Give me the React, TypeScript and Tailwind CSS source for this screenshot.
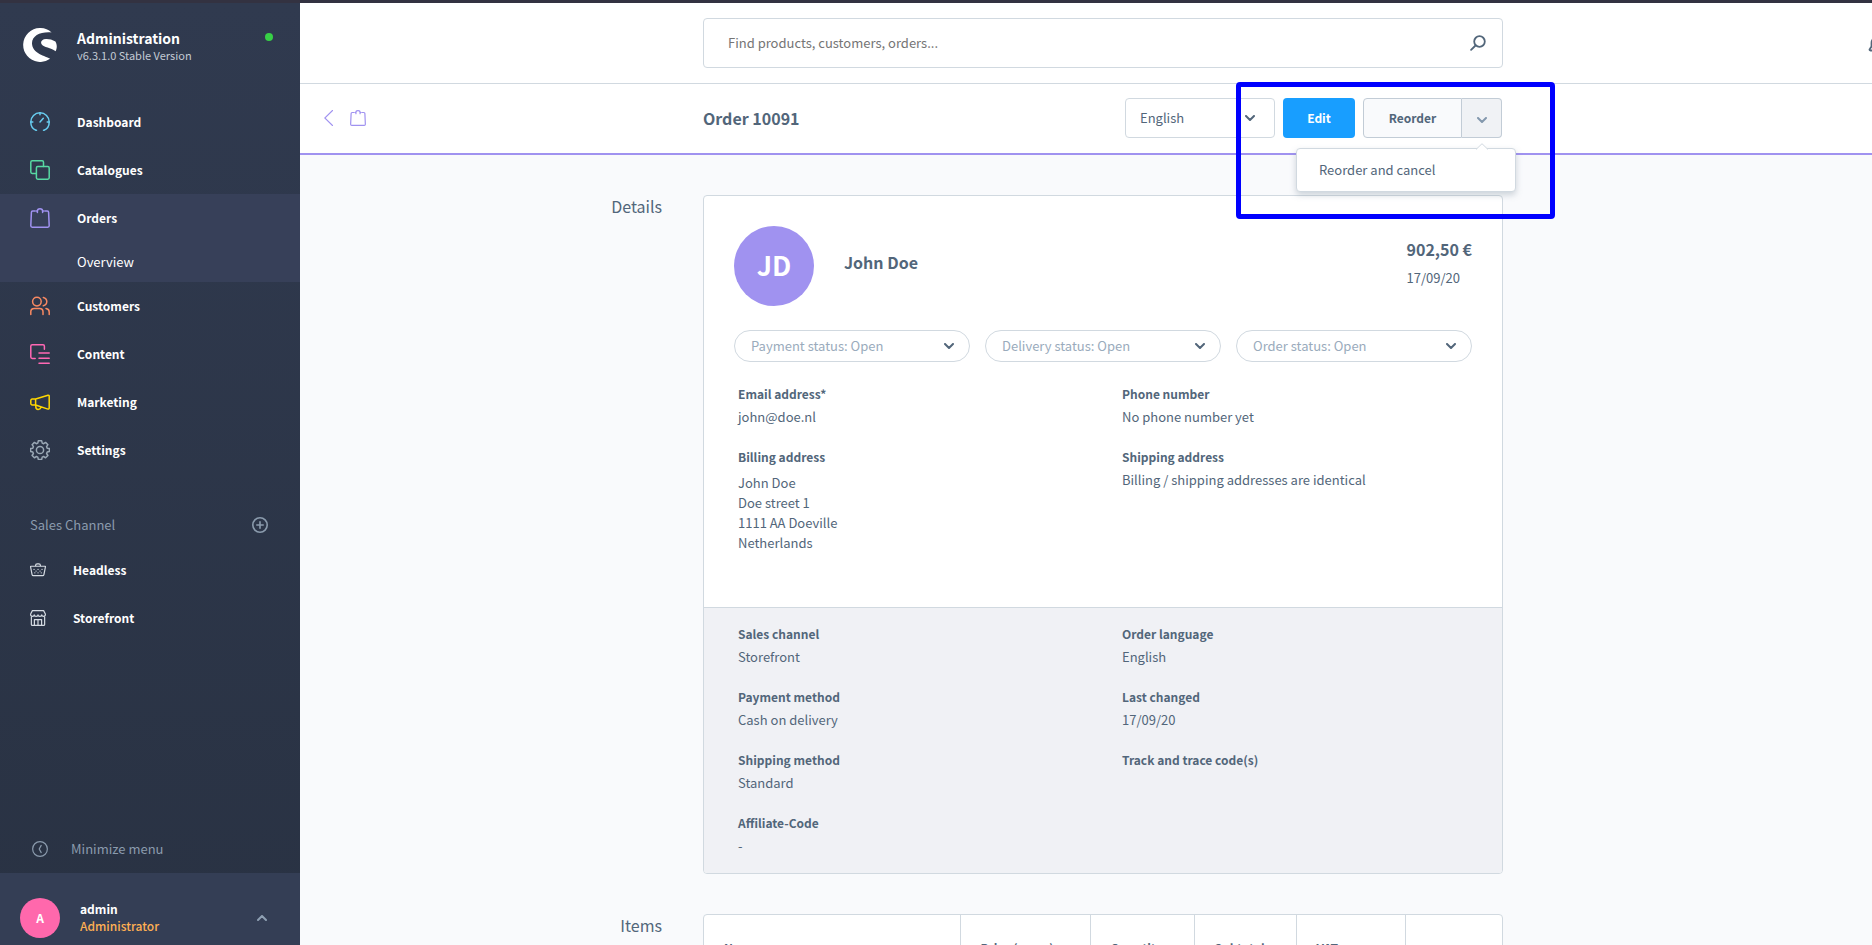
import React from "react";

const fontStack = "font-['Source_Sans_Pro','Noto_Sans_CJK_SC',sans-serif]";

type IconProps = { className?: string };

const Logo = () => (
  <svg viewBox="0 0 34 34" className="h-[34px] w-[34px]" fill="#fff">
    <path d="M28.6 4.400A17 17 0 1 0 27.100 30.800C23 28 9 25.600 9 15.200 9 7.400 18 3.400 28.600 4.400Z" />
    <path d="M32.400 13.600C29.400 11.600 26 10.900 23 11 18.600 11.100 17 14.300 18.800 16.600 20.800 19.200 27.800 20 32.600 23.200 34 21 34.400 16.600 32.400 13.600Z" />
  </svg>
);

const Svg = ({ children, className = "" }: IconProps & { children: React.ReactNode }) => (
  <svg
    viewBox="0 0 20 20"
    className={className}
    fill="none"
    stroke="currentColor"
    strokeWidth="1.5"
    strokeLinecap="round"
    strokeLinejoin="round"
  >
    {children}
  </svg>
);

const DashboardIcon = ({ className }: IconProps) => (
  <Svg className={className}>
    <path d="M6.500 18.300H6C2.900 17 .8 13.800.8 10a9.200 9.200 0 1 1 18.400 0c0 3.800-2.100 7-5.200 8.300h-.5" />
    <path d="M10 .8v2M.8 10h2M17.200 10h2M10 10l3.300-3.700" />
  </Svg>
);

const CatalogueIcon = ({ className }: IconProps) => (
  <Svg className={className}>
    <path d="M6.200 13.400H2.200A1.400 1.400 0 0 1 .8 12V2.200A1.400 1.400 0 0 1 2.200.8h9.900a1.400 1.400 0 0 1 1.400 1.400v4.300" />
    <rect x="6.400" y="6.500" width="12.800" height="12.700" rx="1.400" />
  </Svg>
);

const BagIcon = ({ className }: IconProps) => (
  <Svg className={className}>
    <path d="M5.200 3.100H2.600c-.7 0-1.200.5-1.200 1.200L.8 17.800c0 .8.600 1.400 1.400 1.400h15.600c.8 0 1.400-.6 1.400-1.400l-.6-13.500c0-.7-.5-1.200-1.200-1.200h-2.600" />
    <path d="M7.400 4.600V3.100c0-1.300.9-2.300 2.600-2.300s2.600 1 2.600 2.300v1.500M7.400 3.100h-1M12.600 3.100h1" />
  </Svg>
);

const CustomersIcon = ({ className }: IconProps) => (
  <Svg className={className}>
    <circle cx="6.900" cy="5.600" r="4.300" />
    <path d="M.8 18.400v-2.600c0-2 1.500-3.400 3.400-3.400h5.400c2 0 3.400 1.500 3.400 3.400v2.600M13.300 1.400c2 .5 3.500 2.100 3.500 4.200s-1.500 3.700-3.500 4.200M16 12.500c2 .3 3.200 1.700 3.200 3.500v2.400" />
  </Svg>
);

const ContentIcon = ({ className }: IconProps) => (
  <Svg className={className}>
    <path d="M5.200 14.400h-3A1.400 1.400 0 0 1 .8 13V2.200A1.400 1.400 0 0 1 2.200.8H13a1.400 1.400 0 0 1 1.400 1.400v3.100M9 9h10.200M9 14.200h10.200M9 19.200h10.200" />
  </Svg>
);

const MarketingIcon = ({ className }: IconProps) => (
  <Svg className={className}>
    <path d="M5.600 7 18 3.200a1 1 0 0 1 1.200 1v11.900a1 1 0 0 1-1.200 1L5.600 13H2.200a1.400 1.400 0 0 1-1.400-1.400V8.400A1.400 1.400 0 0 1 2.200 7h3.400ZM5.600 7v6M5.800 13.200v1.600c0 1.600 1 2.600 2.400 2.600s2.500-.9 2.700-2.400" />
  </Svg>
);

const SettingsIcon = ({ className }: IconProps) => (
  <Svg className={className}>
    <circle cx="10" cy="10" r="3.600" />
    <path d="M8.300.8h3.400l.5 2.300 1.400.6 2-1.300 2.300 2.300-1.300 2 .6 1.500 2.200.4v2.900l-2.200.5-.6 1.500 1.300 2-2.300 2.300-2-1.300-1.400.6-.5 2.300H8.300l-.5-2.300-1.400-.6-2 1.300-2.300-2.300 1.300-2-.6-1.500-2.200-.5V8.600l2.200-.4.600-1.500-1.300-2 2.300-2.300 2 1.300 1.400-.6z" />
  </Svg>
);

const BasketIcon = ({ className }: IconProps) => (
  <Svg className={className}>
    <path d="M1.200 5.300h17.600c.4 0 .6.300.5.700l-1.900 9.700c-.2.900-.8 1.300-1.600 1.300H4.200c-.8 0-1.400-.4-1.600-1.300L.7 6c-.1-.4.100-.7.500-.7ZM7 5V4.200c0-1.100.8-1.900 2-1.900h2c1.200 0 2 .8 2 1.900V5" />
    <path d="M5 9.300h.1M10 9.300h.1M15 9.300h.1M7.500 11.300h.1M12.500 11.300h.1M6 13.500h.1M10 13.500h.1M14 13.500h.1" />
  </Svg>
);

const StoreIcon = ({ className }: IconProps) => (
  <Svg className={className}>
    <path d="M1.700 8.500V18c0 .8.500 1.200 1.300 1.200h14c.8 0 1.300-.4 1.300-1.200V8.500M5.500 19v-7h9v7M10 12v7" />
    <path d="M3 .8h14L19.200 5c.2 1.700-.7 3-2.100 3s-2.400-.8-2.400-2c0 1.200-1 2-2.300 2S10 7.200 10 6c0 1.200-1 2-2.400 2S5.300 7.200 5.300 6c0 1.200-1 2-2.400 2S.6 6.700.8 5L3 .8Z" />
  </Svg>
);

const Chevron = ({ className }: IconProps) => (
  <svg viewBox="0 0 10 6" className={className} fill="none" stroke="currentColor" strokeWidth="2" strokeLinecap="round" strokeLinejoin="round">
    <path d="m1 1 4 4 4-4" />
  </svg>
);

const menu = [
  { label: "Dashboard", icon: DashboardIcon, color: "text-[#68cdf0]" },
  { label: "Catalogues", icon: CatalogueIcon, color: "text-[#57d9a3]" },
  { label: "Orders", icon: BagIcon, color: "text-[#a092f0]", sub: "Overview" },
  { label: "Customers", icon: CustomersIcon, color: "text-[#f88962]" },
  { label: "Content", icon: ContentIcon, color: "text-[#ff68b4]" },
  { label: "Marketing", icon: MarketingIcon, color: "text-[#ffd700]" },
  { label: "Settings", icon: SettingsIcon, color: "text-[#9aa8b5]" },
];

const channels = [
  { label: "Headless", icon: BasketIcon },
  { label: "Storefront", icon: StoreIcon },
];

const Sidebar: React.FC = () => (
  <aside className="flex w-[300px] shrink-0 flex-col bg-linear-to-b from-[#303a4f] to-[#293243] text-white">
    <div className="flex h-[95px] items-start pt-6 pl-[23px]">
      <div className="pt-px">
        <Logo />
      </div>
      <div className="ml-5 flex-1">
        <div className="text-[14px] leading-[22px] font-semibold">Administration</div>
        <div className="text-[11px] leading-3 text-[#c3cad4]">v6.3.1.0 Stable Version</div>
      </div>
      <span className="mt-1.5 mr-[27px] h-2 w-2 rounded-full bg-[#37d046]" />
    </div>

    <nav>
      {menu.map(({ label, icon: Icon, color, sub }) => (
        <div key={label} className={sub ? "bg-[#374059]" : ""}>
          <a href="#" className="flex h-12 items-center pl-[30px] text-[12px] font-semibold">
            <Icon className={`mr-[27px] h-5 w-5 ${color}`} />
            {label}
          </a>
          {sub && (
            <a href="#" className="flex h-10 items-center pl-[77px] text-[13px]">
              {sub}
            </a>
          )}
        </div>
      ))}
    </nav>

    <div className="mt-[31px] flex h-10 items-center justify-between pr-8 pl-[30px] text-[13px] text-[#8b9bad]">
      Sales Channel
      <button aria-label="Add sales channel">
        <Svg className="h-4 w-4">
          <circle cx="10" cy="10" r="9" strokeWidth="2" />
          <path d="M10 6v8M6 10h8" strokeWidth="2" />
        </Svg>
      </button>
    </div>
    <nav className="pt-px">
      {channels.map(({ label, icon: Icon }) => (
        <a key={label} href="#" className="flex h-12 items-center pl-[30px] text-[12px] font-semibold">
          <Icon className="mr-[27px] h-4 w-4 text-[#d5dbe2]" />
          {label}
        </a>
      ))}
    </nav>

    <button className="mt-auto flex h-12 items-center pl-8 text-[13px] text-[#8b9bad]">
      <Svg className="mr-[23px] h-4 w-4">
        <circle cx="10" cy="10" r="9.200" />
        <path d="m11.500 5.500-2.500 4.500 2.500 4.500" />
      </Svg>
      Minimize menu
    </button>
    <div className="flex h-[72px] items-center bg-[#343e55] pt-[18px] pl-5">
      <div className="flex h-10 w-10 items-center justify-center rounded-full bg-[#ff68ac] text-[12px] font-semibold">A</div>
      <div className="ml-5 flex-1 pb-0.5 text-[12px] leading-[17px]">
        <div className="font-semibold">admin</div>
        <div className="font-medium text-[#ffb053]">Administrator</div>
      </div>
      <button aria-label="Open user menu" className="mr-[33px]">
        <Chevron className="h-1.5 w-2.5 rotate-180 text-[#8fa0b3]" />
      </button>
    </div>
  </aside>
);

const TopBar: React.FC = () => (
  <header className="relative flex h-[81px] items-center justify-center border-b border-[#d1d9e0] bg-white">
    <div className="flex h-[50px] w-full max-w-[800px] items-center rounded border border-[#d1d9e0] pr-4 pl-6">
      <input
        aria-label="Search"
        placeholder="Find products, customers, orders..."
        className="flex-1 text-[13px] outline-none placeholder:text-[#757575]"
      />
      <button aria-label="Start search">
        <svg viewBox="0 0 16 16" className="h-4 w-4" fill="none" stroke="#52667a" strokeWidth="1.800" strokeLinecap="round">
          <circle cx="9.500" cy="6.500" r="5.300" />
          <path d="m5.500 10.500-4.400 4.400" />
        </svg>
      </button>
    </div>
    <button aria-label="Notifications" className="absolute top-8 right-[18px]">
      <svg viewBox="0 0 20 20" className="h-5 w-5" fill="none" stroke="#52667a" strokeWidth="1.800">
        <path d="M2.500 15.500h15c1 0 1.200-.8.700-1.400L16.500 11.500V8a6.500 6.500 0 0 0-13 0v3.500l-1.700 2.600c-.5.6-.3 1.400.7 1.400Z" strokeLinejoin="round" />
      </svg>
    </button>
  </header>
);

const ReorderMenu: React.FC = () => (
  <div className="absolute top-[50px] -right-3.5 z-10 w-[220px] rounded border border-[#d1d9e0] bg-white shadow-[0_3px_6px_rgba(120,138,155,0.350)]">
    <svg viewBox="0 0 12 7" className="absolute -top-1.5 right-[27px] h-[7px] w-3" fill="#fff" stroke="#d1d9e0">
      <path d="M0 6.500 6 .7l6 5.800" />
    </svg>
    <button className="h-[42px] w-full pl-[22px] text-left text-[13px]">Reorder and cancel</button>
  </div>
);

const SmartBar: React.FC = () => (
  <div className="grid h-[71px] grid-cols-[1fr_minmax(0,800px)_1fr] items-center border-b-2 border-[#a092f0] bg-white pb-px">
    <div className="flex items-center gap-[17px] pl-6 text-[#a092f0]">
      <a href="#" aria-label="Back">
        <svg viewBox="0 0 9 16" className="h-4 w-[9px]" fill="none" stroke="currentColor" strokeWidth="1.100" strokeLinecap="round">
          <path d="M8.500.5.800 8l7.700 7.500" />
        </svg>
      </a>
      <BagIcon className="h-4 w-4" />
    </div>
    <div className="flex items-center justify-between pr-px">
      <h1 className="text-[16px] font-semibold">Order 10091</h1>
      <div className="flex gap-2">
        <div className="relative">
          <select aria-label="Language" className="h-10 w-[150px] appearance-none rounded border border-[#d1d9e0] bg-white pl-3.5 text-[13px]">
            <option>English</option>
          </select>
          <Chevron className="pointer-events-none absolute top-[17px] right-5 h-1.5 w-2.5" />
        </div>
        <button className="h-10 w-[72px] rounded bg-[#189eff] text-[12px] font-semibold text-white">Edit</button>
        <div className="relative flex">
          <button className="h-10 w-[99px] rounded-l border border-[#c2ccd6] bg-[#f9fafc] text-[12px] font-semibold">Reorder</button>
          <button
            aria-label="More reorder options"
            className="flex h-10 w-10 items-center justify-center rounded-r border border-l-0 border-[#c2ccd6] bg-[#f0f2f5] pt-1"
          >
            <Chevron className="h-1.5 w-2.5 text-[#8398ad]" />
          </button>
          <ReorderMenu />
          {/* highlight frame */}
          <div className="pointer-events-none absolute -top-4 -right-[53px] z-20 h-[137px] w-[319px] rounded border-[5px] border-[#0000ff]" />
        </div>
      </div>
    </div>
  </div>
);

const Section: React.FC<{ title: string; children: React.ReactNode }> = ({ title, children }) => (
  <section className="grid grid-cols-[1fr_minmax(0,800px)_1fr]">
    <h2 className="pr-[41px] text-right text-[16px] leading-[22px]">{title}</h2>
    <div className="overflow-hidden rounded border border-[#d1d9e0] bg-white">{children}</div>
  </section>
);

const Field: React.FC<{ label: string; children?: React.ReactNode }> = ({ label, children }) => (
  <div>
    <dt className="text-[12px] leading-6 font-semibold">{label}</dt>
    <dd className="text-[13px] leading-[22px]">{children}</dd>
  </div>
);

const statuses = ["Payment status: Open", "Delivery status: Open", "Order status: Open"];

const Details: React.FC = () => (
  <Section title="Details">
    <div className="px-[30px] pt-[30px]">
      <div className="flex items-start">
        <div className="flex h-20 w-20 items-center justify-center rounded-full bg-[#a092f0] pb-0.5 text-[27px] font-semibold text-white">JD</div>
        <div className="ml-[30px] flex-1 pt-6 text-[16px] leading-6 font-semibold">John Doe</div>
        <div className="pt-3">
          <div className="text-[16px] leading-[22px] font-semibold">902,50 €</div>
          <div className="mt-2 text-[13px] leading-5">17/09/20</div>
        </div>
      </div>
      <div className="mt-6 flex gap-[15px]">
        {statuses.map((status) => (
          <div key={status} className="relative flex-1">
            <select
              aria-label={status.split(":")[0]}
              className="h-8 w-full appearance-none rounded-full border border-[#d1d9e0] bg-white pl-4 text-[13px] text-[#9aabbc]"
            >
              <option>{status}</option>
            </select>
            <Chevron className="pointer-events-none absolute top-[13px] right-4 h-1.5 w-2.5" />
          </div>
        ))}
      </div>
    </div>
    <dl className="grid min-h-[245px] grid-cols-2 content-start gap-x-1 gap-y-[17px] pt-5 pl-[34px]">
      <Field label="Email address*">john@doe.nl</Field>
      <Field label="Phone number">No phone number yet</Field>
      <Field label="Billing address">
        <address className="pt-1 leading-5 not-italic">
          John Doe
          <br />
          Doe street 1
          <br />
          1111 AA Doeville
          <br />
          Netherlands
        </address>
      </Field>
      <Field label="Shipping address">Billing / shipping addresses are identical</Field>
    </dl>
    <dl className="grid grid-cols-2 gap-x-1 gap-y-[17px] border-t border-[#d1d9e0] bg-[#f0f1f5] pt-3.5 pb-4 pl-[34px]">
      <Field label="Sales channel">Storefront</Field>
      <Field label="Order language">English</Field>
      <Field label="Payment method">Cash on delivery</Field>
      <Field label="Last changed">17/09/20</Field>
      <Field label="Shipping method">Standard</Field>
      <Field label="Track and trace code(s)" />
      <Field label="Affiliate-Code">-</Field>
    </dl>
  </Section>
);

const columns = [
  { label: "Name", width: "w-[256px]" },
  { label: "Price (gross)", width: "w-[130px]" },
  { label: "Quantity", width: "w-[104px]" },
  { label: "Subtotal", width: "w-[102px]" },
  { label: "VAT", width: "w-[109px]" },
];

const Items: React.FC = () => (
  <Section title="Items">
    <table className="w-full table-fixed text-left text-[12px]">
      <thead>
        <tr className="h-[66px]">
          {columns.map(({ label, width }) => (
            <th key={label} className={`border-r border-[#d1d9e0] pl-5 font-semibold ${width}`}>
              {label}
            </th>
          ))}
          <td />
        </tr>
      </thead>
    </table>
  </Section>
);

export default function App() {
  return (
    <div className={`flex h-screen flex-col overflow-hidden text-[#52667a] ${fontStack}`}>
      <div className="h-[3px] shrink-0 bg-[#333241]" />
      <div className="flex min-h-0 flex-1">
        <Sidebar />
        {/* the page body runs a little past the right edge of the window */}
        <main className="-mr-[34px] flex-1 bg-[#f9fafc]">
          <TopBar />
          <SmartBar />
          <div className="flex flex-col gap-10 pt-10">
            <Details />
            <Items />
          </div>
        </main>
      </div>
    </div>
  );
}
